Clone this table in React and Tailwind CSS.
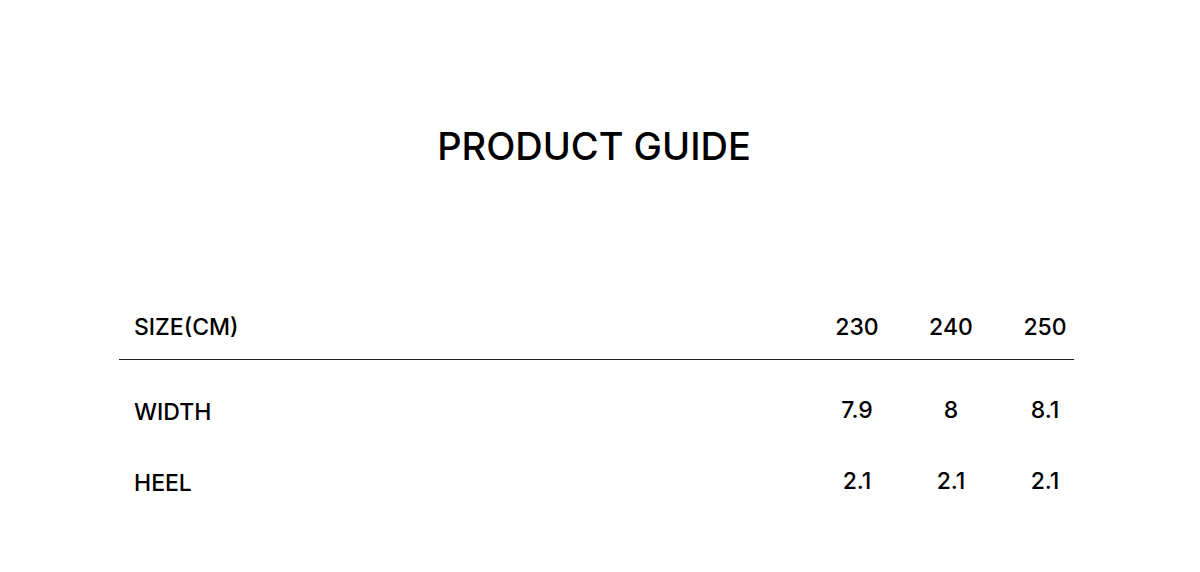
export default function App() {
  const rows = [
    ["WIDTH", ["7.9", "8", "8.1"]],
    ["HEEL", ["2.1", "2.1", "2.1"]],
  ];
  return (
    <div className="w-[1200px] h-[572px] bg-white text-black" style={{ fontFamily: "Inter, 'Noto Sans', sans-serif" }}>
      <div className="pt-[124px] pr-[12px] text-center text-[38px] leading-[44px] font-medium">PRODUCT GUIDE</div>
      <div className="ml-[119px] w-[955px] mt-[128px]">
        <div className="flex items-center h-[64px] border-b border-[#222] text-[23px] font-medium">
          <div className="flex-1 pl-[15px]">SIZE(CM)</div>
          {["230", "240", "250"].map((s, i) => (
            <div key={s} className={"w-[58px] text-center " + (i ? "ml-[36px]" : "")}>{s}</div>
          ))}
        </div>
        <div className="pt-[15px]">
          {rows.map(([label, vals]) => (
            <div key={label} className="flex items-center h-[71px] text-[23px] font-medium">
              <div className="flex-1 pl-[15px] pt-[4px]">{label}</div>
              {vals.map((v, i) => (
                <div key={i} className={"w-[58px] text-center " + (i ? "ml-[36px]" : "")}>{v}</div>
              ))}
            </div>
          ))}
        </div>
      </div>
    </div>
  );
}
